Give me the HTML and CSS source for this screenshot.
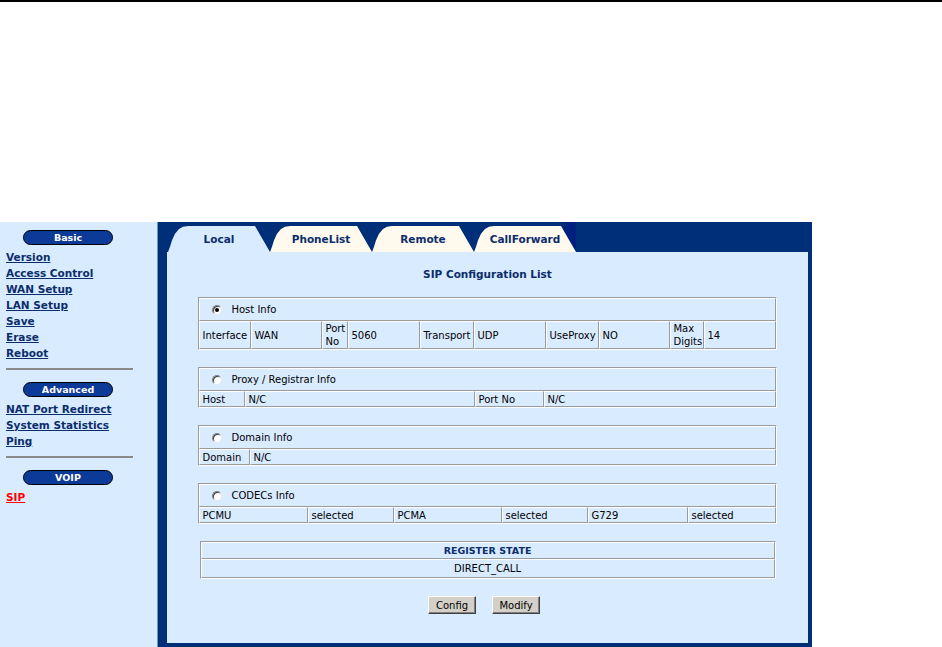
FILE: index.html
```html
<!DOCTYPE html>
<html lang="en">
<head>
  <meta charset="UTF-8" />
  <title>SIP Configuration</title>
  <link rel="stylesheet" href="styles.css">
</head>
<body>
  <div class="topline"></div>
  <div class="banner"></div>

  <div class="layout">
    <!-- LEFT MENU -->
    <aside class="sidebar">
      <div class="pill">Basic</div>
      <ul class="menu">
        <li><a href="#">Version</a></li>
        <li><a href="#">Access Control</a></li>
        <li><a href="#">WAN Setup</a></li>
        <li><a href="#">LAN Setup</a></li>
        <li><a href="#">Save</a></li>
        <li><a href="#">Erase</a></li>
        <li><a href="#">Reboot</a></li>
      </ul>
      <div class="sep"></div>

      <div class="pill">Advanced</div>
      <ul class="menu">
        <li><a href="#">NAT Port Redirect</a></li>
        <li><a href="#">System Statistics</a></li>
        <li><a href="#">Ping</a></li>
      </ul>
      <div class="sep"></div>

      <div class="pill">VOIP</div>
      <ul class="menu">
        <li><a href="#" class="current">SIP</a></li>
      </ul>
    </aside>

    <!-- MAIN PANEL -->
    <main class="panel">
      <div class="tabs">
        <a href="#" class="tab active">Local</a>
        <a href="#" class="tab">PhoneList</a>
        <a href="#" class="tab">Remote</a>
        <a href="#" class="tab">CallForward</a>
      </div>

      <div class="content">
        <h2 class="title">SIP Configuration List</h2>

        <!-- Host Info -->
        <table class="grid">
          <colgroup>
            <col width="52"><col width="71"><col width="26"><col width="72"><col width="54">
            <col width="72"><col width="53"><col width="71"><col width="34"><col width="71">
          </colgroup>
          <tr class="head">
            <td colspan="10"><div class="head-in"><span class="radio checked"></span>Host Info</div></td>
          </tr>
          <tr class="data">
            <td>Interface</td><td>WAN</td><td>Port No</td><td>5060</td><td>Transport</td>
            <td>UDP</td><td>UseProxy</td><td>NO</td><td>Max Digits</td><td>14</td>
          </tr>
        </table>

        <!-- Proxy / Registrar Info -->
        <table class="grid">
          <colgroup>
            <col width="46"><col width="230"><col width="69"><col width="231">
          </colgroup>
          <tr class="head">
            <td colspan="4"><div class="head-in"><span class="radio"></span>Proxy / Registrar Info</div></td>
          </tr>
          <tr class="data">
            <td>Host</td><td>N/C</td><td>Port No</td><td>N/C</td>
          </tr>
        </table>

        <!-- Domain Info -->
        <table class="grid">
          <colgroup>
            <col width="51"><col width="525">
          </colgroup>
          <tr class="head">
            <td colspan="2"><div class="head-in"><span class="radio"></span>Domain Info</div></td>
          </tr>
          <tr class="data">
            <td>Domain</td><td>N/C</td>
          </tr>
        </table>

        <!-- CODECs Info -->
        <table class="grid">
          <colgroup>
            <col width="109"><col width="86"><col width="108"><col width="86"><col width="100"><col width="87">
          </colgroup>
          <tr class="head">
            <td colspan="6"><div class="head-in"><span class="radio"></span>CODECs Info</div></td>
          </tr>
          <tr class="data">
            <td>PCMU</td><td>selected</td><td>PCMA</td><td>selected</td><td>G729</td><td>selected</td>
          </tr>
        </table>

        <!-- Register state -->
        <table class="grid state">
          <tr class="state-head"><td>REGISTER STATE</td></tr>
          <tr class="state-row"><td>DIRECT_CALL</td></tr>
        </table>

        <div class="buttons">
          <button class="btn">Config</button>
          <button class="btn">Modify</button>
        </div>
      </div>
    </main>
  </div>
</body>
</html>
```

FILE: styles.css
```css
/* ------------------------------------------------------------
   COLORS
------------------------------------------------------------ */
:root {
  --navy: #002f7a;      /* panel frame */
  --notch: #00207f;     /* dark square right of the tabs */
  --pill: #0c3a98;      /* menu headers */
  --light: #d9ebff;     /* page background */
  --cream: #fff9ee;     /* inactive tabs */
  --link: #0b2d6b;      /* menu links, headings */
  --line: #9a9a9a;      /* table lines */
}

* {
  margin: 0;
  padding: 0;
  box-sizing: border-box;
}
body {
  font-family: "DejaVu Sans", Verdana, sans-serif;
  font-size: 10px;
  color: #000;
  background: #fff;
  overflow: hidden;
}
a {
  color: inherit;
}
ul {
  list-style: none;
}

/* ------------------------------------------------------------
   TOP
------------------------------------------------------------ */
.topline {
  height: 2px;
  background: #000;
}
.banner {
  height: 220px;
}

.layout {
  display: flex;
  height: 425px;
}

/* ------------------------------------------------------------
   SIDEBAR
------------------------------------------------------------ */
.sidebar {
  width: 158px;
  background: var(--light);
  border-right: 1px solid #7d94b9;
  padding: 8px 0 0 6px;
}
.pill {
  width: 90px;
  height: 15px;
  margin-left: 17px;
  margin-bottom: 4px;
  background: var(--pill);
  border: 1px solid #000;
  border-radius: 8px;
  color: #fff;
  font-size: 9.5px;
  font-weight: bold;
  line-height: 13px;
  text-align: center;
}
.menu li {
  line-height: 16px;
  font-size: 10.5px;
  font-weight: bold;
}
.menu a {
  color: var(--link);
  text-decoration: underline;
}
.menu a.current {
  color: #ff0000;
}
.sep {
  width: 127px;
  height: 2px;
  background: #8a8a8a;
  margin: 7px 0 12px;
}

/* ------------------------------------------------------------
   PANEL + TABS
------------------------------------------------------------ */
.panel {
  width: 654px;
  background: var(--navy);
  padding: 0 4px 4px 9px;
  display: flex;
  flex-direction: column;
}
.tabs {
  display: flex;
  height: 30px;
  padding: 4px 0 0 1px;
}
.tab {
  width: 102px;
  height: 26px;
  background: var(--cream);
  color: var(--link);
  font-size: 10.5px;
  font-weight: bold;
  text-decoration: none;
  text-align: center;
  line-height: 26px;
  clip-path: polygon(0 100%, 2px 80%, 4px 55%, 7px 30%, 11px 12%, 15px 3%, 20px 0,
                     calc(100% - 15px) 0, 100% 100%);
}
.tab.active {
  background: var(--light);
}
.tabs::after {
  content: "";
  width: 12px;
  height: 26px;
  margin-top: -4px;
  margin-left: -12px;
  background: var(--notch);
}

.content {
  flex: 1;
  background: var(--light);
  padding-top: 15px;
}
.title {
  font-size: 10.5px;
  font-weight: bold;
  color: var(--link);
  text-align: center;
  line-height: 14px;
  margin-bottom: 16px;
}

/* ------------------------------------------------------------
   TABLES
------------------------------------------------------------ */
.grid {
  width: 576px;
  margin: 0 auto 17px;
  table-layout: fixed;
  border-collapse: separate;
  border-spacing: 0;
  border: 1px solid;
  border-color: var(--line) #fff #fff var(--line);
}
.grid td {
  border: 1px solid;
  border-color: #fff var(--line) var(--line) #fff;
  padding: 0 2px;
  vertical-align: middle;
  overflow: hidden;
}
.head td {
  padding: 0;
}
.head-in {
  height: 21px;
  display: flex;
  align-items: center;
  padding-left: 12px;
  font-size: 10px;
}
.data td {
  height: 16px;
  line-height: 13px;
}

.radio {
  position: relative;
  width: 10px;
  height: 10px;
  margin-right: 9px;
  border-radius: 50%;
  background: #fff;
  border: 1px solid;
  border-color: #808080 #e8e8e8 #e8e8e8 #808080;
  box-shadow: inset 1px 1px 0 #404040;
}
.radio.checked::after {
  content: "";
  position: absolute;
  left: 2px;
  top: 2px;
  width: 4px;
  height: 4px;
  border-radius: 50%;
  background: #000;
}

.state td {
  text-align: center;
}
.state-head td {
  height: 17px;
  font-size: 9.5px;
  font-weight: bold;
  color: var(--link);
}
.state-row td {
  height: 19px;
}

/* ------------------------------------------------------------
   BUTTONS
------------------------------------------------------------ */
.buttons {
  display: flex;
  justify-content: center;
  gap: 16px;
  padding-right: 7px;
  margin-top: 1px;
}
.btn {
  width: 48px;
  height: 18px;
  background: #d4d0c8;
  border: 1px solid;
  border-color: #fff #404040 #404040 #fff;
  box-shadow: inset -1px -1px 0 #808080;
  font-family: "DejaVu Sans", Verdana, sans-serif;
  font-size: 10px;
  color: #000;
}
```
